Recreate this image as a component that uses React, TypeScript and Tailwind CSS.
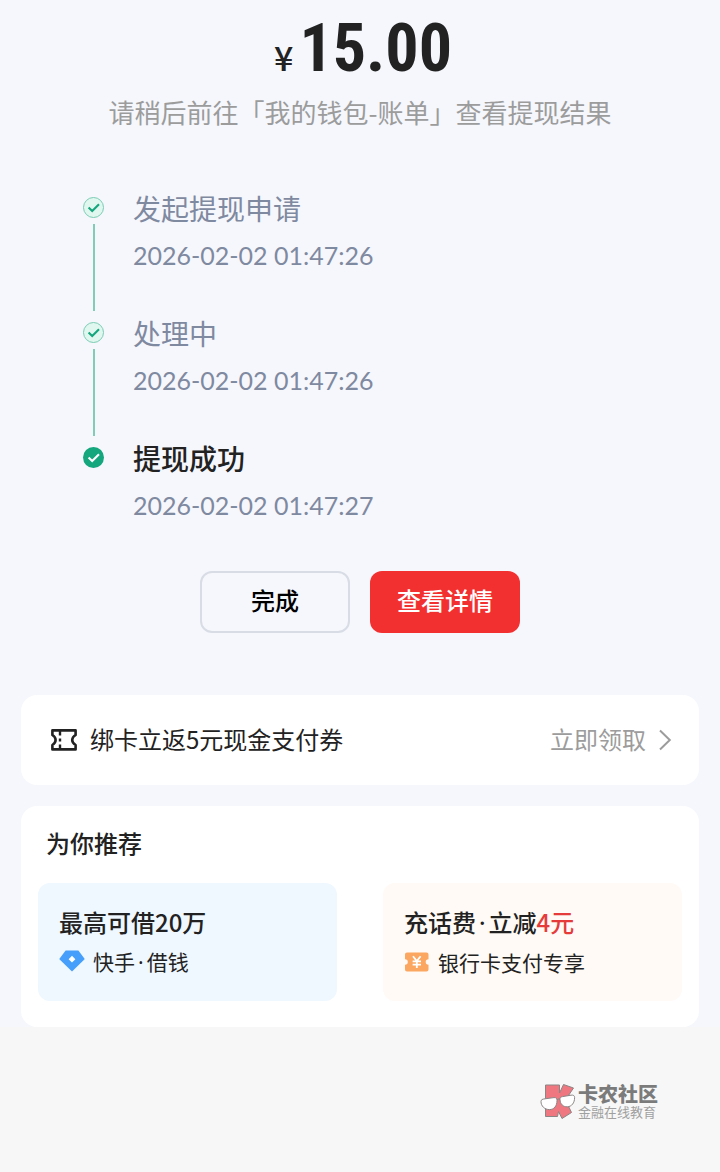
import type { ReactNode } from "react";
import { clsx } from "clsx";

type Step = {
  title: string;
  time: string;
  current?: boolean;
};

const steps: Step[] = [
  { title: "发起提现申请", time: "2026-02-02 01:47:26" },
  { title: "处理中", time: "2026-02-02 01:47:26" },
  { title: "提现成功", time: "2026-02-02 01:47:27", current: true },
];

function CheckIcon({ filled = false }: { filled?: boolean }) {
  return (
    <svg viewBox="0 0 22 22" className="h-[22px] w-[22px] shrink-0" aria-hidden="true">
      <circle
        cx="10.5"
        cy="10.5"
        r={filled ? 10.5 : 10}
        fill={filled ? "#14a67c" : "#e0f7ef"}
        stroke={filled ? "none" : "#7accb2"}
      />
      <path
        d="M5.6 10.4 9.2 14 16 7.2"
        fill="none"
        stroke={filled ? "#fff" : "#14a67c"}
        strokeWidth="2.1"
      />
    </svg>
  );
}

function CouponIcon() {
  return (
    <svg viewBox="0 0 28 24" className="h-6 w-7 shrink-0" aria-hidden="true">
      <path
        d="M2.4 2.4H25.6V7C23.4 8.4 22.2 10 22.2 12S23.4 15.6 25.6 17V21.4H2.4V17C4.6 15.6 5.6 14 5.6 12S4.6 8.4 2.4 7Z"
        fill="none"
        stroke="#222"
        strokeWidth="2.6"
        strokeLinejoin="round"
      />
      <path d="M10 3V7.6M10 10.4V13.6M10 16.4V21" stroke="#222" strokeWidth="2.4" />
    </svg>
  );
}

function DiamondIcon() {
  return (
    <svg viewBox="0 0 26 22" className="h-[22px] w-[26px] shrink-0" aria-hidden="true">
      <path
        d="M6.6.5H19.4L25.4 8.4C25.7 8.9 25.7 9.2 25.3 9.6L13 21.6.7 9.6C.3 9.2.3 8.9.6 8.4Z"
        fill="#459ffb"
      />
      <path d="M13 5.8 16.4 9.2 13 12.6 9.6 9.2Z" fill="#fff" />
    </svg>
  );
}

function YuanTicketIcon() {
  return (
    <svg viewBox="0 0 26 20" className="h-5 w-[26px] shrink-0" aria-hidden="true">
      <path
        d="M3 .5H22.5Q24.5.5 24.5 2.5V7.2A2.8 2.8 0 0 0 24.5 12.8V17.5Q24.5 19.5 22.5 19.5H3Q1 19.5 1 17.5V12.8A2.8 2.8 0 0 0 1 7.2V2.5Q1 .5 3 .5Z"
        fill="#fba661"
      />
      <path
        d="M9 4.3 12.8 9 16.6 4.3M12.8 9V16M8.6 9.4H17M8.6 12.6H17"
        fill="none"
        stroke="#fff"
        strokeWidth="1.8"
      />
    </svg>
  );
}

function BrandMark() {
  return (
    <svg viewBox="0 0 38 38" className="h-[38px] w-[38px] shrink-0" aria-hidden="true">
      <g stroke="#8b8585" strokeLinejoin="round">
        <path
          d="M5.5 2H19.5V10L23.5 1.5 33.5 5 25.5 17 31.5 29.5 22 35.5 18.5 28.5 17.5 33.5H5.5Z"
          fill="#ee7780"
        />
        <path
          d="M1 18.5C1 16.5 2.5 16.2 5 15.8L14 14.6C16.2 14.4 17 15.4 17 17.5 17 23 14 26.6 9.5 26.6 4.5 26.6 1 23 1 18.5Z"
          fill="#fff"
        />
        <path
          d="M20 16.5C19.8 14.8 20.6 14 22.6 13.6L31 12.2C33.4 11.8 34.6 12.6 34.6 14.6 34.6 20 31.6 23.6 27.4 23.8 23 24 20.2 21 20 16.5Z"
          fill="#fff"
        />
        <path d="M17 16.8Q18.5 15.6 20 16.2" fill="none" />
      </g>
    </svg>
  );
}

function TimelineStep({ title, time, current = false }: Step) {
  return (
    <li className="flex min-h-[125px] gap-7">
      <div className="flex flex-col items-center pt-[9px]">
        <CheckIcon filled={current} />
        {!current && <span className="mt-[5px] mb-[2px] w-[2px] flex-1 bg-[#82cbb7]" />}
      </div>
      <div>
        <p
          className={clsx(
            "text-[28px] leading-10",
            current ? "font-medium text-[#222222]" : "text-[#7f89a0]"
          )}
        >
          {title}
        </p>
        <p className="mt-[9px] font-[Lato,sans-serif] text-[25px] leading-9 text-[#7f89a0]">{time}</p>
      </div>
    </li>
  );
}

// the CJK font draws this dot a full em wide
function Dot() {
  return <span className="px-[3px] font-['Noto_Sans',sans-serif]">·</span>;
}

type OfferProps = {
  title: ReactNode;
  label: ReactNode;
  icon: ReactNode;
  className: string;
};

function Offer({ title, label, icon, className }: OfferProps) {
  return (
    <a href="#" className={clsx("block flex-1 rounded-xl px-[21px] pt-[21px] pb-[23px]", className)}>
      <p className="text-[24px] leading-9 font-medium">{title}</p>
      <p className="mt-[5px] flex h-8 items-center gap-2 text-[21px] leading-8">
        {icon}
        <span>{label}</span>
      </p>
    </a>
  );
}

export default function App() {
  return (
    <div className="min-h-screen bg-[#f7f7f7] font-['Noto_Sans_CJK_SC',sans-serif] text-[#222222]">
      <main className="bg-[#f5f7fc] pt-[17px]">
        <h1 className="flex h-16 items-baseline justify-center gap-[6px] pl-[6px] leading-16">
          <span className="text-[34px] font-medium">¥</span>
          <span className="font-['Roboto_Condensed',Roboto,sans-serif] text-[66px] font-bold">
            15.00
          </span>
        </h1>
        <p className="mt-[13px] text-center text-[26px] leading-9 text-[#9c9c9c]">
          请稍后前往「我的钱包-账单」查看提现结果
        </p>

        <ol className="mt-[58px] pl-[83px]">
          {steps.map((step) => (
            <TimelineStep key={step.title} {...step} />
          ))}
        </ol>

        <div className="mt-2 flex justify-center gap-5 text-[24px] font-medium">
          <button
            type="button"
            className="h-[62px] w-[150px] rounded-xl border-2 border-[#d8dce5] pb-1 text-black"
          >
            完成
          </button>
          <button
            type="button"
            className="h-[62px] w-[150px] rounded-xl bg-[#f33030] pb-1 text-white"
          >
            查看详情
          </button>
        </div>

        <a
          href="#"
          className="mx-[21px] mt-[62px] flex h-[90px] items-center rounded-2xl bg-white pr-[27px] pl-[29px] text-[24px]"
        >
          <CouponIcon />
          <span className="ml-3 pb-[2px]">绑卡立返5元现金支付券</span>
          <span className="ml-auto pb-[2px] text-[#9c9c9c]">立即领取</span>
          <svg viewBox="0 0 14 22" className="ml-3 h-[22px] w-[14px]" aria-hidden="true">
            <path d="M2 1.5 11.8 11 2 20.5" fill="none" stroke="#9c9c9c" strokeWidth="2" />
          </svg>
        </a>

        <section className="mx-[21px] mt-[21px] rounded-2xl bg-white px-[17px] pt-[19px] pb-[26px]">
          <h2 className="pl-2 text-[24px] leading-9 font-medium">为你推荐</h2>
          <div className="mt-[22px] flex gap-[46px]">
            <Offer
              className="bg-[#eff7ff]"
              title="最高可借20万"
              label={
                <>
                  快手
                  <Dot />
                  借钱
                </>
              }
              icon={<DiamondIcon />}
            />
            <Offer
              className="bg-[#fffaf5]"
              title={
                <>
                  充话费
                  <Dot />
                  立减<span className="text-[#e63b3b]">4元</span>
                </>
              }
              label="银行卡支付专享"
              icon={<YuanTicketIcon />}
            />
          </div>
        </section>
      </main>

      <footer className="flex justify-end pt-14 pr-[62px] font-['Liberation_Sans','Noto_Sans_CJK_SC',sans-serif]">
        <BrandMark />
        <div>
          <p className="text-[20px] leading-6 font-black text-[#7b7b7b]">卡农社区</p>
          <p className="text-[13px] leading-3 text-[#a0a0a0]">金融在线教育</p>
        </div>
      </footer>
    </div>
  );
}
